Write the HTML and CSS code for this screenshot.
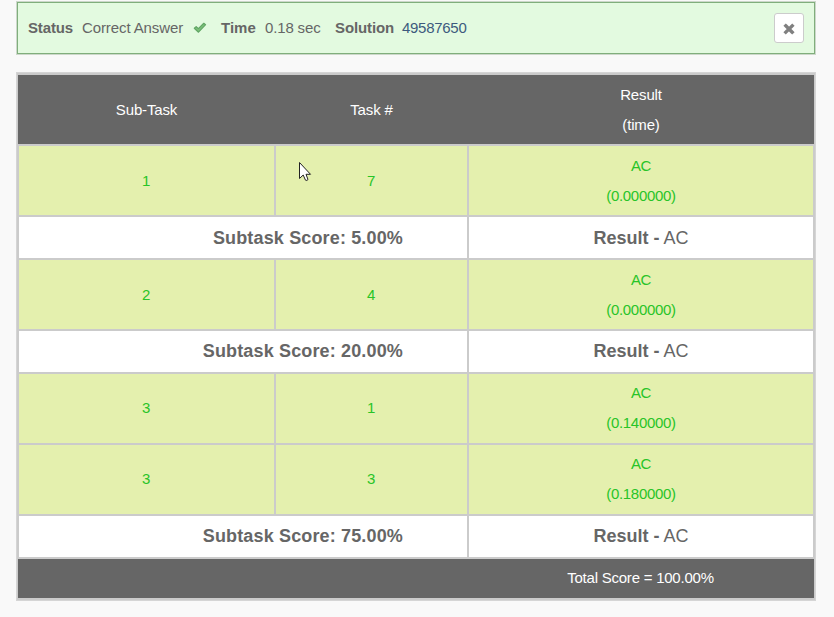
FILE: index.html
```html
<!DOCTYPE html>
<html lang="en">
<head>
<meta charset="utf-8">
<title>Submission result</title>
<link rel="stylesheet" href="styles.css">
</head>
<body>
<main class="page">
  <section class="status">
    <b class="label label-status">Status</b>
    <span class="value value-status">Correct Answer</span>
    <svg class="tick" width="14" height="12" viewBox="0 0 14 12"><path d="M1.300 6.300 3.200 4.600 5.400 6.600 10.800 1.300 12.600 2.700 5.500 10.200Z" fill="#7cc07a" stroke="#62a766" stroke-width="1.200" stroke-linejoin="round"/></svg>
    <b class="label label-time">Time</b>
    <span class="value value-time">0.18 sec</span>
    <b class="label label-solution">Solution</b>
    <a class="value solution">49587650</a>
    <button class="close" aria-label="Close"><svg width="12" height="12" viewBox="0 0 12 12"><path d="M2.800 2.800 9.200 9.200M9.200 2.800 2.800 9.200" fill="none" stroke="#808080" stroke-width="3.400" stroke-linecap="square"/></svg></button>
  </section>

  <section class="results">
    <div class="row dark head"><div>Sub-Task</div><div>Task #</div><div>Result<br>(time)</div></div>
    <div class="row test"><div>1</div><div>7</div><div>AC<br>(0.000000)</div></div>
    <div class="row score"><div><b>Subtask Score: 5.00%</b></div><div><b>Result -</b> AC</div></div>
    <div class="row test"><div>2</div><div>4</div><div>AC<br>(0.000000)</div></div>
    <div class="row score tight"><div><b>Subtask Score: 20.00%</b></div><div><b>Result -</b> AC</div></div>
    <div class="row test tight"><div>3</div><div>1</div><div>AC<br>(0.140000)</div></div>
    <div class="row test tight"><div>3</div><div>3</div><div>AC<br>(0.180000)</div></div>
    <div class="row score tight"><div><b>Subtask Score: 75.00%</b></div><div><b>Result -</b> AC</div></div>
    <div class="row dark total"><div>Total Score = 100.00%</div></div>
  </section>
</main>
<svg class="pointer" width="14" height="21" viewBox="0 0 14 21"><path d="M.5.5V16.500L4.200 13 6.500 18.200Q8 19 9 17.500L7 12.300H11.500Z" fill="#fff" stroke="#222" stroke-width="1"/></svg>
</body>
</html>
```
FILE: styles.css
```css
* { box-sizing: border-box; }
body {
  margin: 0;
  background: #f9f9f9;
  color: #666;
  font: 15px/30px "Liberation Sans", Arial, sans-serif;
}
.page { width: 800px; margin-left: 16px; padding-top: 1px; }

.status {
  display: flex;
  align-items: center;
  height: 52px;
  margin: 1px 1px 18px;
  padding: 0 10px;
  border: 1px solid #80ae7c;
  outline: 1px solid #cdd8cb;
  background: #e3fae0;
}
.label-status { width: 54px; letter-spacing: -.15px; }
.value-status { width: 111px; letter-spacing: -.1px; }
.tick { width: 14px; margin-right: 14px; }
.label-time { width: 44px; }
.value-time { width: 70px; letter-spacing: -.15px; }
.label-solution { width: 67px; letter-spacing: -.1px; }
.solution { color: #3d5a7e; letter-spacing: -.28px; }
.close {
  display: flex;
  align-items: center;
  justify-content: center;
  width: 30px;
  height: 30px;
  margin-left: auto;
  padding: 2px 0 0;
  border: 1px solid #ccc;
  border-radius: 3px;
  background: #fff;
}

.results {
  display: grid;
  gap: 2px;
  padding: 2px;
  border: 1px solid #d5d5d5;
  background: #cbcbcb;
  text-align: center;
}
.row { display: grid; grid-template-columns: 255px 191px 344px; gap: 2px; }
.row > div { display: grid; align-content: center; }
.dark { margin: 0 -1px; padding: 0 1px; background: #666; color: #fff; }
.head, .test { height: 69px; }
.head { letter-spacing: -.15px; }
.test { color: #28c428; letter-spacing: -.3px; }
.test > div { background: #e4f0ae; }
.test > div:not(:last-child) { padding-right: 1px; }
.test.tight > div { padding-bottom: 2px; }
.score { grid-template-columns: 448px 344px; height: 41px; font-size: 18px; }
.score > div { display: block; align-content: start; padding-top: 6px; background: #fff; }
.score.tight > div { padding-top: 5px; }
.score > div:first-child { padding-right: 64px; text-align: right; letter-spacing: .15px; }
.total { grid-template-columns: 344px; justify-content: end; height: 39px; letter-spacing: -.23px; }
.total > div { padding: 0 1px 2px 0; }

.pointer { position: absolute; left: 299px; top: 162px; }
```
